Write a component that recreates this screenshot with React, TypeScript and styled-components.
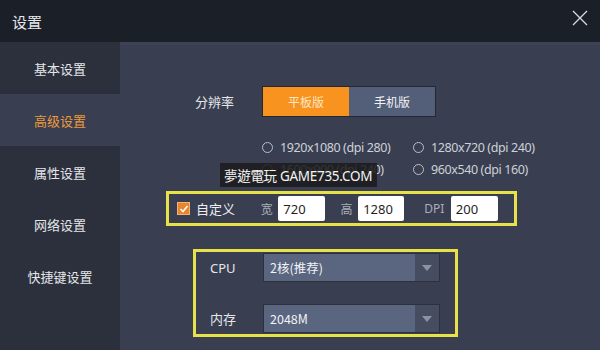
import React from "react";
import styled, { createGlobalStyle } from "styled-components";

const Global = createGlobalStyle`
  html, body { margin: 0; padding: 0; background: #383e4e; }
  body { font-family: "Noto Sans CJK SC", "Noto Sans", sans-serif; }
  * { box-sizing: border-box; }
`;

const Window = styled.div`
  width: 600px;
  height: 350px;
  display: flex;
  flex-direction: column;
  background: #393f50;
  overflow: hidden;
`;

const TitleBar = styled.div`
  height: 42px;
  flex: none;
  background: #1b1f28;
  display: flex;
  align-items: center;
  justify-content: space-between;
  padding: 0 10px 0 12px;
  color: #e6e8ec;
  font-size: 15px;
`;

const CloseBtn = styled.div`
  width: 20px;
  height: 20px;
  display: flex;
  align-items: center;
  justify-content: center;
  margin-top: -6px;
`;

const Body = styled.div`
  flex: 1;
  display: flex;
  min-height: 0;
`;

const Sidebar = styled.div`
  width: 120px;
  flex: none;
  background: #2b303c;
  display: flex;
  flex-direction: column;
`;

const NavItem = styled.div<{ $active?: boolean }>`
  height: 52px;
  display: flex;
  align-items: center;
  justify-content: center;
  font-size: 13px;
  color: ${(p) => (p.$active ? "#ee9a3c" : "#e4e6ea")};
  background: ${(p) => (p.$active ? "#393f50" : "transparent")};
`;

const Main = styled.div`
  flex: 1;
  position: relative;
  display: flex;
  flex-direction: column;
  padding: 41px 0 0 46px;
  border-top: 3px solid #3d4355;
`;

const ResRow = styled.div`
  display: flex;
  align-items: center;
  padding-left: 29px;
`;

const RowLabel = styled.div`
  width: 67px;
  font-size: 13px;
  color: #e4e6ea;
`;

const Segmented = styled.div`
  display: flex;
  border: 1px solid #232832;
  height: 31px;
`;

const SegBtn = styled.div<{ $on?: boolean }>`
  width: 86px;
  display: flex;
  align-items: center;
  justify-content: center;
  font-size: 12px;
  background: ${(p) => (p.$on ? "#f7931e" : "#535e78")};
  color: ${(p) => (p.$on ? "#fde6c6" : "#f2f3f5")};
`;

const RadioGrid = styled.div`
  display: grid;
  grid-template-columns: 151px auto;
  row-gap: 4px;
  margin: 21px 0 0 96px;
`;

const RadioItem = styled.div`
  display: flex;
  align-items: center;
  gap: 7px;
  height: 18px;
  font-size: 12.5px;
  letter-spacing: -0.4px;
  color: #cdd1d8;
  font-family: "Noto Sans", "Noto Sans CJK SC", sans-serif;
`;

const RadioCircle = styled.span`
  width: 11px;
  height: 11px;
  border: 1px solid #b9bec8;
  border-radius: 50%;
  flex: none;
`;

const Watermark = styled.div`
  position: absolute;
  left: 100px;
  top: 118px;
  height: 24px;
  padding: 0 5px 0 4px;
  display: flex;
  align-items: center;
  background: rgba(28, 28, 30, 0.88);
  color: #f4f4f4;
  font-size: 13.5px;
  letter-spacing: -0.3px;
  font-family: "Noto Sans", "Noto Sans CJK TC", sans-serif;
`;

const CustomBox = styled.div`
  margin-top: 13px;
  width: 351px;
  height: 35px;
  border: 3px solid #e7e24a;
  display: flex;
  align-items: center;
  padding-left: 8px;
`;

const Check = styled.span`
  width: 13px;
  height: 13px;
  background: #e8842a;
  border: 1px solid #f0b27a;
  display: flex;
  align-items: center;
  justify-content: center;
  flex: none;
`;

const CheckLabel = styled.span`
  margin-left: 6px;
  width: 66px;
  font-size: 13px;
  color: #eceef2;
`;

const FieldLabel = styled.span<{ $w: number; $ml?: number }>`
  width: ${(p) => p.$w}px;
  margin-left: ${(p) => p.$ml ?? 0}px;
  font-size: 12px;
  color: #a9aeb9;
  font-family: "Noto Sans", "Noto Sans CJK SC", sans-serif;
`;

const NumInput = styled.div<{ $w?: number }>`
  width: ${(p) => p.$w ?? 47}px;
  height: 25px;
  background: #ffffff;
  border-radius: 2px;
  display: flex;
  align-items: center;
  padding-left: 5px;
  font-size: 13px;
  color: #1f1f1f;
  margin-right: 16px;
  font-family: "Noto Sans", sans-serif;
`;

const ResourceBox = styled.div`
  margin: 23px 0 0 27px;
  width: 265px;
  height: 88px;
  border: 3px solid #e7e24a;
  display: flex;
  flex-direction: column;
  justify-content: space-between;
  padding: 1px 0 1px 14px;
`;

const SelectRow = styled.div`
  display: flex;
  align-items: center;
`;

const SelectLabel = styled.div`
  width: 53px;
  font-size: 13px;
  color: #e4e6ea;
  font-family: "Noto Sans", "Noto Sans CJK SC", sans-serif;
`;

const Select = styled.div`
  width: 177px;
  height: 29px;
  display: flex;
  border: 1px solid #2c313c;
`;

const SelectValue = styled.div`
  flex: 1;
  background: #5a6580;
  color: #f2f3f5;
  font-size: 12.5px;
  display: flex;
  align-items: center;
  padding-left: 6px;
`;

const SelectArrow = styled.div`
  width: 24px;
  background: #464d60;
  display: flex;
  align-items: center;
  justify-content: center;
`;

const Tri = () => (
  <svg width="10" height="6" viewBox="0 0 10 6">
    <path d="M0 0 L10 0 L5 6 Z" fill="#8a92a4" />
  </svg>
);

const nav = ["基本设置", "高级设置", "属性设置", "网络设置", "快捷键设置"];

export default function App() {
  return (
    <>
      <Global />
      <Window>
        <TitleBar>
          <span>设置</span>
          <CloseBtn>
            <svg width="16" height="16" viewBox="0 0 16 16">
              <path d="M1 1 L15 15 M15 1 L1 15" stroke="#d8dbe0" strokeWidth="1.3" />
            </svg>
          </CloseBtn>
        </TitleBar>
        <Body>
          <Sidebar>
            {nav.map((n, i) => (
              <NavItem key={n} $active={i === 1}>
                {n}
              </NavItem>
            ))}
          </Sidebar>
          <Main>
            <ResRow>
              <RowLabel>分辨率</RowLabel>
              <Segmented>
                <SegBtn $on>平板版</SegBtn>
                <SegBtn>手机版</SegBtn>
              </Segmented>
            </ResRow>
            <RadioGrid>
              <RadioItem>
                <RadioCircle />
                1920x1080 (dpi 280)
              </RadioItem>
              <RadioItem>
                <RadioCircle />
                1280x720 (dpi 240)
              </RadioItem>
              <RadioItem>
                <RadioCircle />
                1600x900 (dpi 240)
              </RadioItem>
              <RadioItem>
                <RadioCircle />
                960x540 (dpi 160)
              </RadioItem>
            </RadioGrid>
            <Watermark>夢遊電玩 GAME735.COM</Watermark>
            <CustomBox>
              <Check>
                <svg width="10" height="10" viewBox="0 0 10 10">
                  <path d="M1.5 5 L4 7.5 L8.5 2" stroke="#fff" strokeWidth="1.6" fill="none" />
                </svg>
              </Check>
              <CheckLabel>自定义</CheckLabel>
              <FieldLabel $w={18}>宽</FieldLabel>
              <NumInput>720</NumInput>
              <FieldLabel $w={18}>高</FieldLabel>
              <NumInput>1280</NumInput>
              <FieldLabel $w={27} $ml={4}>DPI</FieldLabel>
              <NumInput $w={48}>200</NumInput>
            </CustomBox>
            <ResourceBox>
              <SelectRow>
                <SelectLabel>CPU</SelectLabel>
                <Select>
                  <SelectValue>2核(推荐)</SelectValue>
                  <SelectArrow>
                    <Tri />
                  </SelectArrow>
                </Select>
              </SelectRow>
              <SelectRow>
                <SelectLabel>内存</SelectLabel>
                <Select>
                  <SelectValue>2048M</SelectValue>
                  <SelectArrow>
                    <Tri />
                  </SelectArrow>
                </Select>
              </SelectRow>
            </ResourceBox>
          </Main>
        </Body>
      </Window>
    </>
  );
}
